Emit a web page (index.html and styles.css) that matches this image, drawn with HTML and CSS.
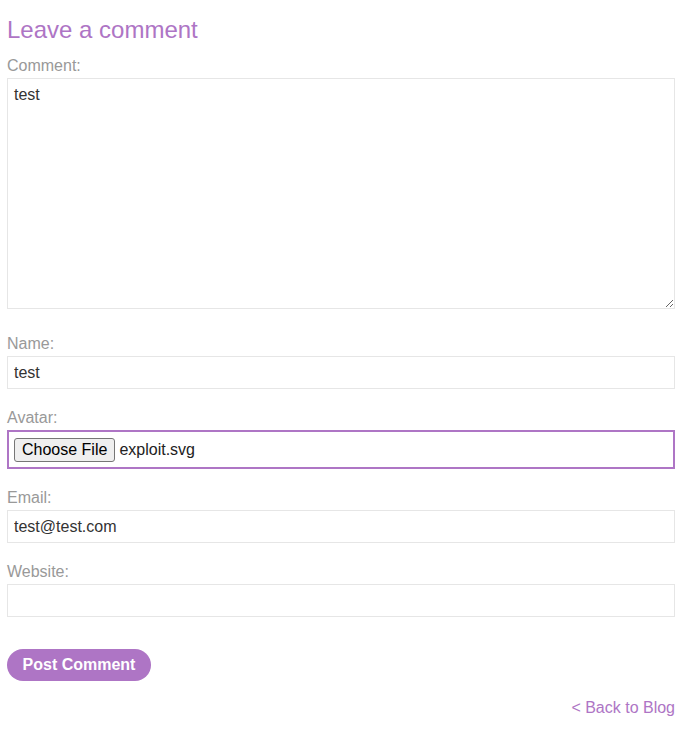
FILE: index.html
```html
<!DOCTYPE html>
<html>
<head>
<meta charset="utf-8">
<link rel="stylesheet" href="styles.css">
</head>
<body>
<section class="comment-form">
  <h2 class="title">Leave a comment</h2>
  <form class="form">
    <label class="label">Comment:</label>
    <textarea class="textarea">test</textarea>
    <label class="label gap-lg">Name:</label>
    <input class="field" type="text" value="test">
    <label class="label gap">Avatar:</label>
    <div class="file-field">
      <span class="file-btn">Choose File</span>
      <span class="file-name">exploit.svg</span>
    </div>
    <label class="label gap">Email:</label>
    <input class="field" type="text" value="test@test.com">
    <label class="label gap">Website:</label>
    <input class="field" type="text" value="">
    <div class="actions">
      <button class="submit" type="button">Post Comment</button>
    </div>
  </form>
  <div class="back">
    <a class="back-link" href="#">&lt; Back to Blog</a>
  </div>
</section>
</body>
</html>
```
FILE: styles.css
```css
* { box-sizing: border-box; }
html, body {
  margin: 0;
  padding: 0;
  background: #fff;
}
body {
  font-family: "Liberation Sans", Arial, sans-serif;
  font-size: 16px;
  color: #333;
}
.comment-form {
  padding: 16px 20px 0 7px;
}
.title {
  margin: 0;
  font-size: 24px;
  font-weight: normal;
  line-height: 28px;
  color: #ae75c5;
}
.form {
  display: flex;
  flex-direction: column;
  margin-top: 12px;
}
.label {
  display: block;
  color: #999;
  font-size: 16px;
  line-height: 18px;
  padding-top: 1px;
  margin-bottom: 3px;
}
.label.gap { margin-top: 19px; }
.label.gap-lg { margin-top: 25px; }
.textarea {
  display: block;
  width: 100%;
  height: 231px;
  border: 1px solid #e6e6e6;
  border-radius: 0;
  padding: 7px 6px;
  font-family: "Liberation Sans", Arial, sans-serif;
  font-size: 16px;
  line-height: 18px;
  color: #333;
  resize: vertical;
  margin: 0;
}
.field {
  display: block;
  width: 100%;
  height: 33px;
  border: 1px solid #e6e6e6;
  border-radius: 0;
  padding: 0 6px;
  font-family: "Liberation Sans", Arial, sans-serif;
  font-size: 16px;
  color: #333;
  margin: 0;
  outline: none;
}
.file-field {
  display: flex;
  align-items: center;
  gap: 4px;
  height: 39px;
  border: 2px solid #ae75c5;
  padding: 0 5px;
}
.file-btn {
  display: inline-flex;
  align-items: center;
  height: 24px;
  padding: 0 7px;
  background: #efefef;
  border: 1px solid #767676;
  border-radius: 3px;
  color: #000;
  font-size: 16px;
}
.file-name {
  color: #222;
  font-size: 16px;
}
.actions {
  margin-top: 32px;
}
.submit {
  display: inline-block;
  height: 32px;
  width: 144px;
  border: none;
  border-radius: 16px;
  background: #ae75c5;
  color: #fff;
  font-family: "Liberation Sans", Arial, sans-serif;
  font-weight: bold;
  font-size: 16px;
  padding: 0;
}
.back {
  display: flex;
  justify-content: flex-end;
  margin-top: 18px;
}
.back-link {
  color: #ae75c5;
  text-decoration: none;
  font-size: 16px;
  line-height: 18px;
}
```
